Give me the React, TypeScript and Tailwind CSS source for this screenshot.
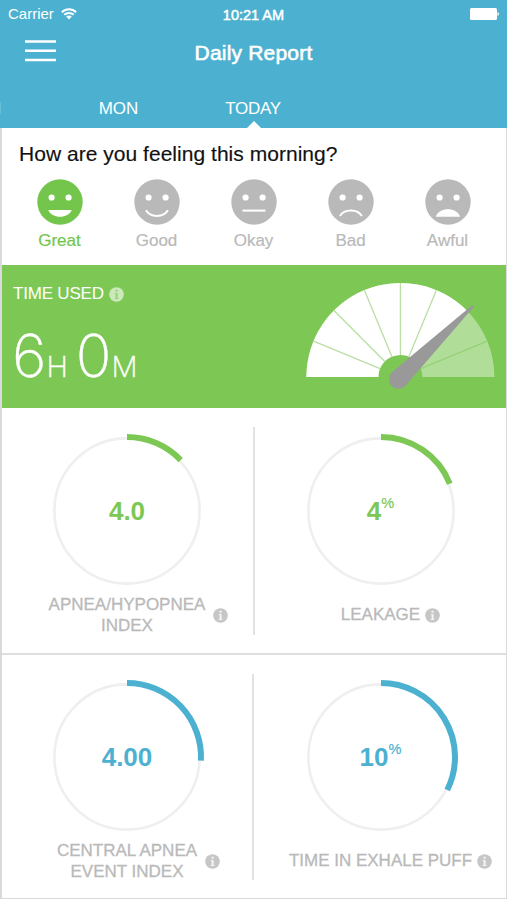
import type { ReactNode } from "react";

const FONT = "font-['Liberation_Sans',Arial,sans-serif]";

const moods = ["Great", "Good", "Okay", "Bad", "Awful"] as const;
type Mood = (typeof moods)[number];

function Mouth({ mood }: { mood: Mood }) {
  if (mood === "Great") return <path d="M11.3 31H34.7C31.5 40 14.5 40 11.3 31Z" fill="white" />;
  if (mood === "Awful") return <path d="M10.8 37.8C13.5 27.8 32.5 27.8 35 37.8Z" fill="white" />;
  const d = {
    Good: "M12 31.3C16 38.8 29.7 38.8 33.9 31.3",
    Okay: "M11.5 31.6H34.5",
    Bad: "M12 37C16 29.5 29.7 29.5 33.9 37",
  }[mood];
  return <path d={d} fill="none" stroke="white" strokeWidth="2" />;
}

function Face({ mood, active }: { mood: Mood; active: boolean }) {
  return (
    <button className="flex flex-col items-center">
      <svg width="46" height="46" viewBox="0 0 46 46">
        <circle cx="23" cy="23" r="22.7" fill={active ? "#73c64b" : "#b9b9b9"} />
        <circle cx="14.6" cy="18.5" r="3.1" fill="white" />
        <circle cx="31.6" cy="18.5" r="3.1" fill="white" />
        <Mouth mood={mood} />
      </svg>
      <span
        className={
          active
            ? "mt-[6px] text-[17px] leading-5 text-[#73c64b] [-webkit-text-stroke:0.2px_#73c64b]"
            : "mt-[6px] text-[17px] leading-5 text-[#b9b9b9] [-webkit-text-stroke:0.2px_#b9b9b9]"
        }
      >
        {mood}
      </span>
    </button>
  );
}

function Info({ color, dot }: { color: string; dot: string }) {
  return (
    <svg width="15" height="15" viewBox="0 0 15 15" className="shrink-0">
      <circle cx="7.5" cy="7.5" r="7.3" fill={color} />
      <path d="M6.5 2.8H8.6V4.7H6.5ZM5.8 6H8.6V11H9.4V12H5.7V11H6.6V7H5.8Z" fill={dot} />
    </svg>
  );
}

function Gauge() {
  const point = (deg: number, r: number) => {
    const a = (deg * Math.PI) / 180;
    return [101.4 + r * Math.cos(a), 112 - r * Math.sin(a)];
  };
  return (
    <svg width="207" height="142" viewBox="0 0 207 142">
      <path d="M7.4 112A94 94 0 0 1 195.4 112H123.4A22 22 0 0 0 79.4 112Z" fill="#b0de99" />
      <path d="M7.4 112A94 94 0 0 1 167.9 45.5L117 96.4A22 22 0 0 0 79.4 112Z" fill="white" />
      {[22.5, 67.5, 90, 112.5, 135, 157.5].map((deg) => {
        const [x1, y1] = point(deg, 22);
        const [x2, y2] = point(deg, 94);
        return <line key={deg} x1={x1} y1={y1} x2={x2} y2={y2} stroke={deg < 45 ? "#95d174" : "#b9dfa4"} strokeWidth="1.3" />;
      })}
      <path d="M92.8 107.2L173.2 40.2Q175.4 40.2 174.6 42L106 121.2A9.2 9.2 0 1 1 92.8 107.2Z" fill="#999999" />
    </svg>
  );
}

type MetricProps = {
  value: string;
  percent?: boolean;
  sweep: number;
  color: string;
  label: ReactNode;
  left?: boolean;
};

function Metric({ value, percent, sweep, color, label, left }: MetricProps) {
  const a = (sweep * Math.PI) / 180;
  const x = 78 + 74 * Math.sin(a);
  const y = 78 - 74 * Math.cos(a);
  return (
    <div className="flex flex-col items-center">
      <div className="grid size-[156px] place-items-center">
        <svg width="156" height="156" viewBox="0 0 156 156" className="col-start-1 row-start-1">
          <circle cx="78" cy="78" r="72.6" fill="none" stroke="#efeff0" strokeWidth="2.6" />
          <path d={`M78 4A74 74 0 0 1 ${x} ${y}`} fill="none" stroke={color} strokeWidth="6" />
        </svg>
        <div className="col-start-1 row-start-1 flex items-start text-[26px] leading-[30px] font-bold" style={{ color }}>
          {value}
          {percent && <span className="-mt-[8px] text-[14.5px] font-normal [-webkit-text-stroke:0.2px]">%</span>}
        </div>
      </div>
      <div
        className={
          left
            ? "mt-[6px] flex h-[41px] items-center gap-[8px] pl-[23px]"
            : "mt-[6px] flex h-[41px] items-center gap-[5px] pl-[20px]"
        }
      >
        <span className="text-center text-[17px] leading-[20.5px] whitespace-nowrap text-[#b9b9b9] [-webkit-text-stroke:0.3px_#b9b9b9]">
          {label}
        </span>
        <Info color="#c6c6c6" dot="#f4f4f4" />
      </div>
    </div>
  );
}

export default function App() {
  return (
    <main className={`${FONT} flex h-[900px] w-[507px] flex-col overflow-hidden bg-white`}>
      <header className="h-[128px] bg-[#4cb1d0] text-white">
        <div className="grid h-[28px] grid-cols-3 items-center px-2">
          <div className="flex items-center gap-[7px] text-[15px]">
            Carrier
            <svg width="16" height="12" viewBox="0 0 16 12" fill="none" stroke="white" strokeWidth="1.9">
              <path d="M.8 4.2C5 .2 11 .2 15.2 4.2M3.3 6.8C6 4.3 10 4.3 12.7 6.8" />
              <path d="M5.2 8.6C6.8 7.1 9.2 7.1 10.8 8.6L8 11.5Z" fill="white" stroke="none" />
            </svg>
          </div>
          <span className="pt-[2px] text-center text-[14.5px] leading-5 [-webkit-text-stroke:0.5px_white]">10:21 AM</span>
          <svg width="30" height="12" viewBox="0 0 30 12" fill="white" className="justify-self-end">
            <rect x="1" y="0" width="27" height="12" rx="1.5" />
            <path d="M28.5 4Q30 4.3 30 6T28.5 8Z" />
          </svg>
        </div>
        <div className="grid h-[48px] grid-cols-[160px_1fr_160px] items-center">
          <svg width="31" height="22" viewBox="0 0 31 22" stroke="white" strokeWidth="2.4" className="-mt-[2px] ml-[25px]">
            <path d="M0 1.5H31M0 10.8H31M0 20H31" />
          </svg>
          <h1 className="pt-px text-center text-[21px] tracking-[0.2px] [-webkit-text-stroke:0.6px_white]">Daily Report</h1>
        </div>
        <nav className="flex h-[52px] text-[17px] leading-5">
          <div className="mt-[26px] mr-[51px] h-3 w-px bg-[#68bdd7]" />
          <button className="flex w-[133px] items-start justify-center pt-[23px]">MON</button>
          <button className="flex w-[137px] flex-col items-center pt-[23px]">
            <span className="mr-px tracking-[-0.3px]">TODAY</span>
            <svg width="14" height="7" viewBox="0 0 14 7" className="mt-[2px]">
              <path d="M0 7L7 0L14 7Z" fill="white" />
            </svg>
          </button>
        </nav>
      </header>

      <div className="h-[771px] border-r border-b border-l-2 border-[#dadade]">
        <section className="h-[137px] pt-[13px]">
          <h2 className="pl-[17px] text-[21px] leading-[25px] tracking-[0.03px] text-[#111] [-webkit-text-stroke:0.15px_#111]">
            How are you feeling this morning?
          </h2>
          <div className="mt-[13px] ml-[9px] grid w-[485px] grid-cols-5">
            {moods.map((mood) => (
              <Face key={mood} mood={mood} active={mood === "Great"} />
            ))}
          </div>
        </section>

        <section className="flex h-[143px] justify-between bg-[#7dc855] text-white">
          <div className="pl-[11px]">
            <div className="mt-[19px] flex items-center gap-[5px] text-[17px] leading-5 tracking-[-0.2px]">
              TIME USED
              <Info color="#cbe9bb" dot="#97d277" />
            </div>
            <div className="-ml-[1px] mt-[20px] flex items-baseline font-['Inter',sans-serif] text-[59px] leading-[64px] font-extralight [-webkit-text-stroke:0.4px_white]">
              <span>6</span>
              <span className="text-[29px]">H</span>
              <span className="ml-[8px]">0</span>
              <span className="text-[29px]">M</span>
            </div>
          </div>
          <Gauge />
        </section>

        <section className="grid h-[247px] grid-cols-[250px_3px_251px] border-b-2 border-[#dedede] pt-[25px]">
          <Metric left value="4.0" sweep={46.5} color="#7dc855" label={<>APNEA/HYPOPNEA<br />INDEX</>} />
          <div className="-mt-[6px] ml-px h-[208px] bg-[#e2e2e2]" />
          <Metric value="4" percent sweep={68.4} color="#7dc855" label="LEAKAGE" />
        </section>

        <section className="grid h-[243px] grid-cols-[250px_3px_251px] pt-[24px]">
          <Metric left value="4.00" sweep={92.8} color="#4cb1d0" label={<>CENTRAL APNEA<br />EVENT INDEX</>} />
          <div className="-mt-[5px] mr-px h-[206px] bg-[#e2e2e2]" />
          <Metric value="10" percent sweep={116.5} color="#4cb1d0" label="TIME IN EXHALE PUFF" />
        </section>
      </div>
    </main>
  );
}
